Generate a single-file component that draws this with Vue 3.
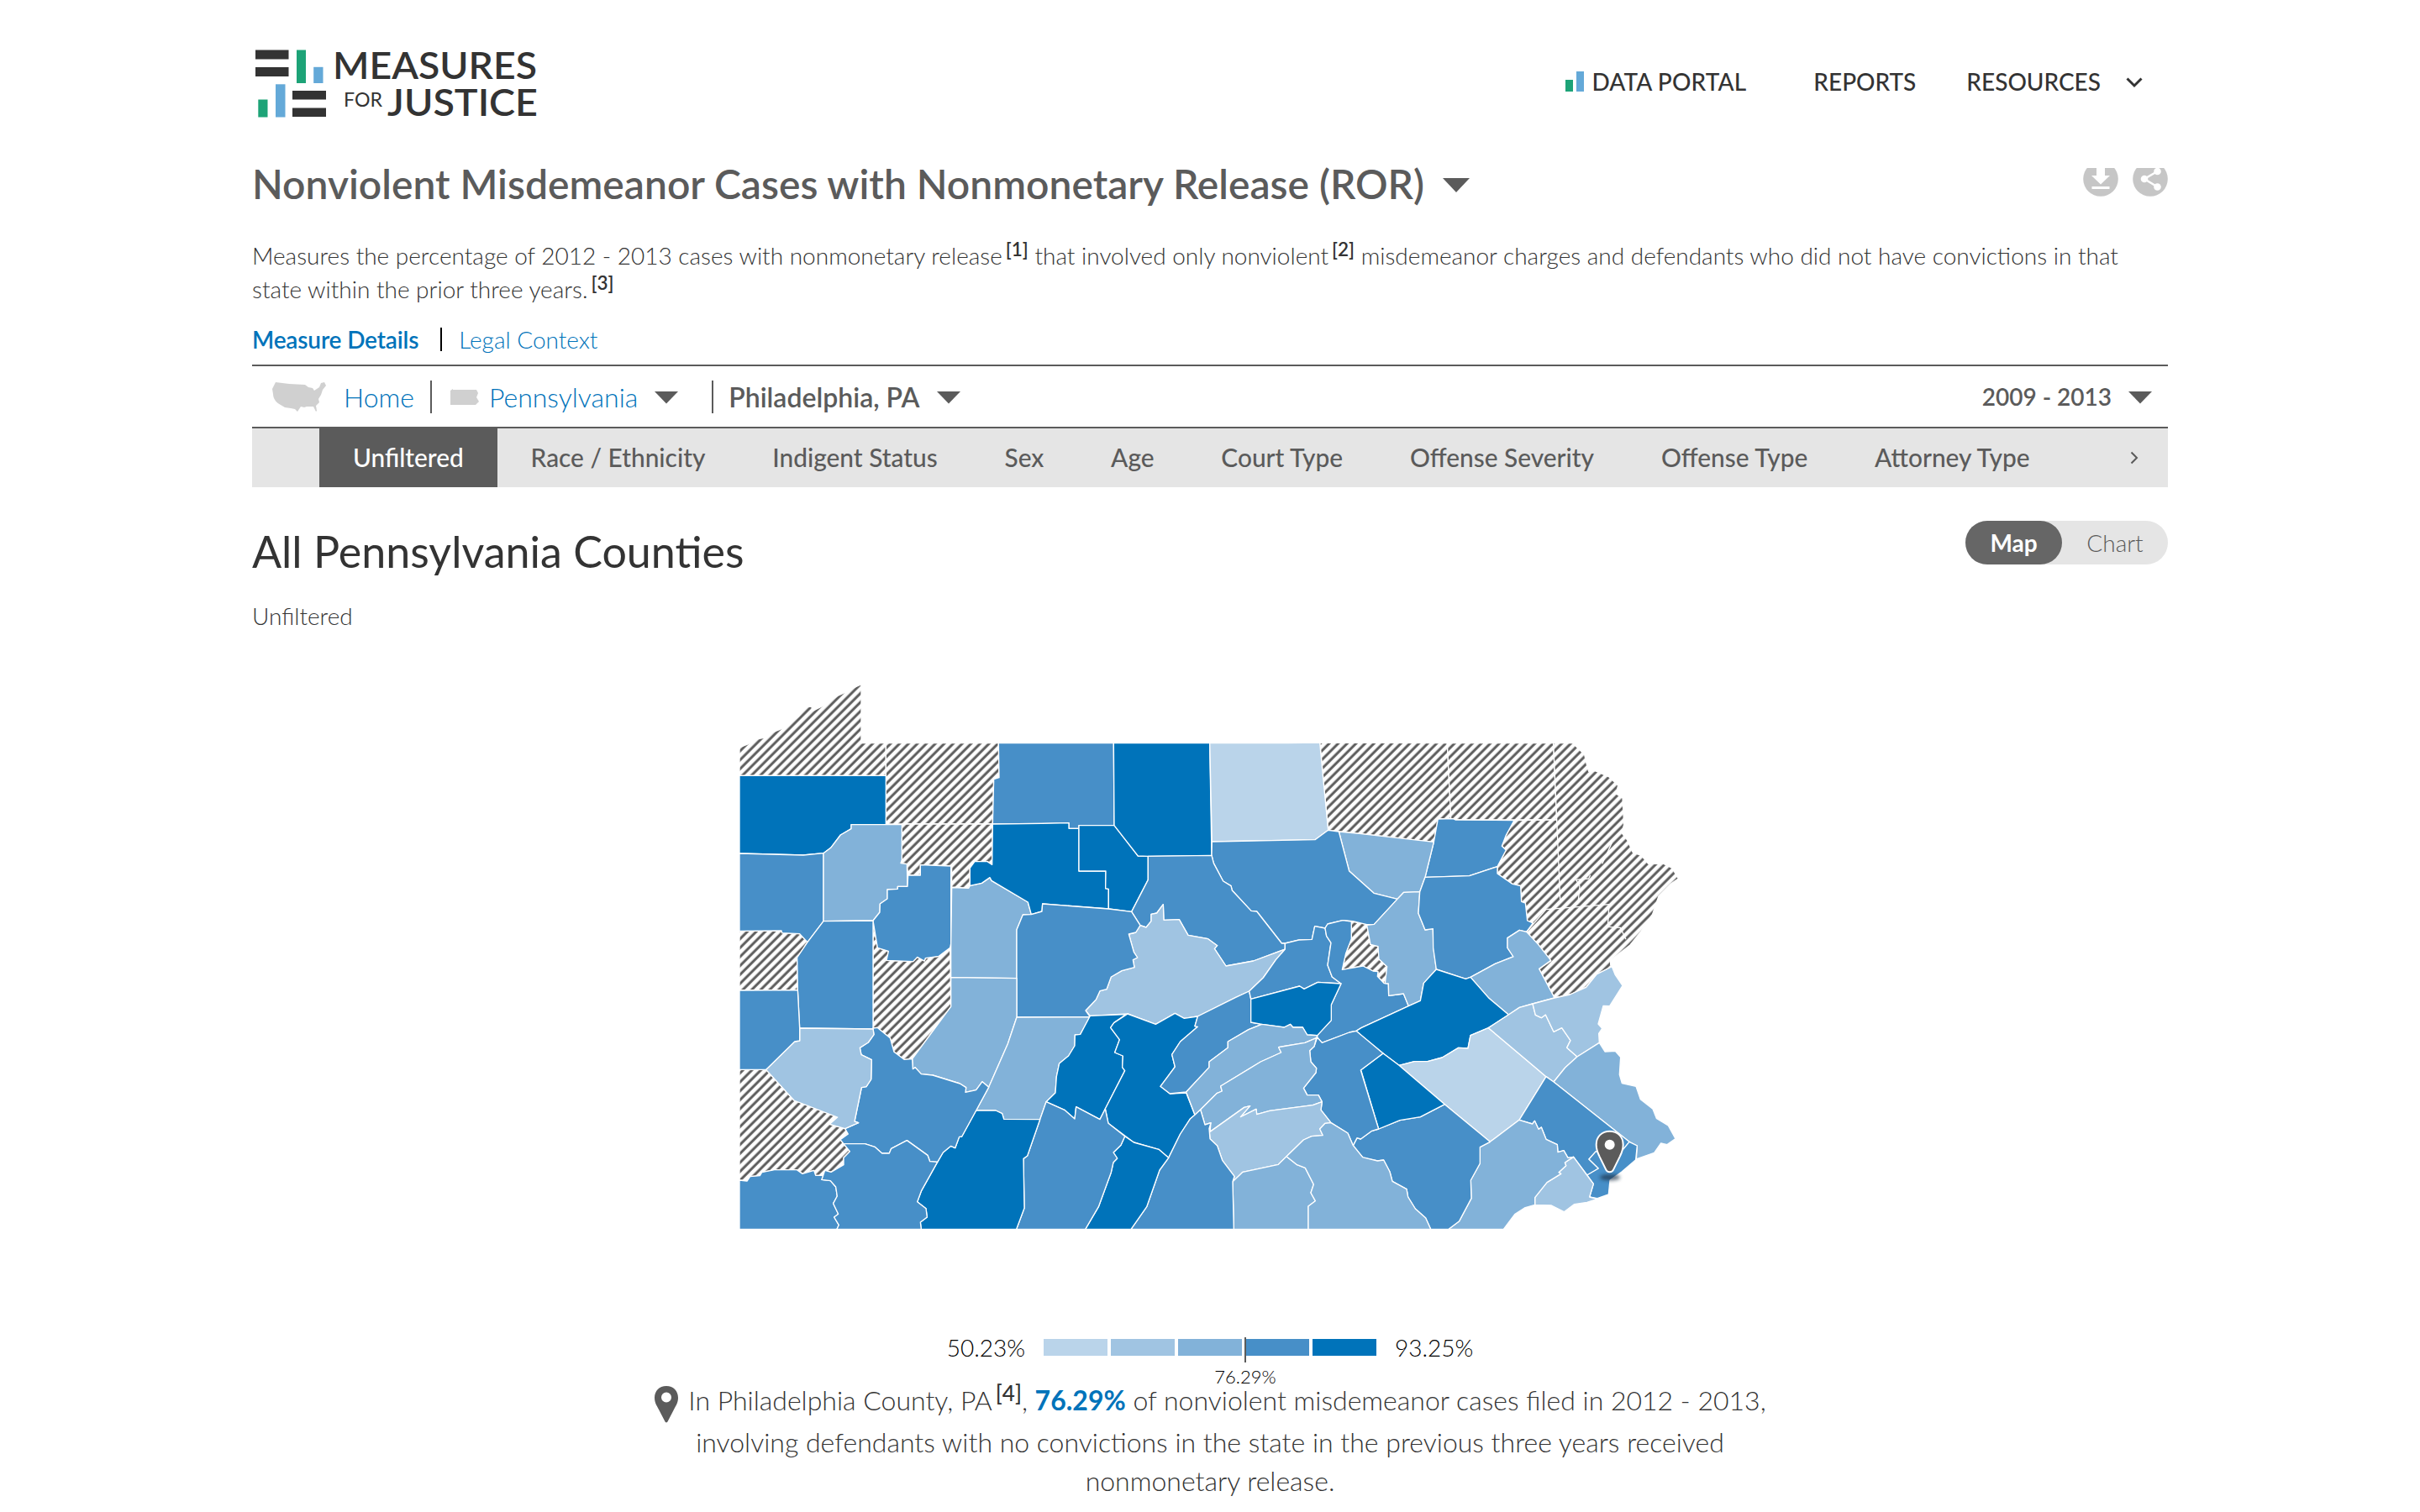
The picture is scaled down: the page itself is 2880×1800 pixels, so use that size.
<script setup>
const tabs = ['Unfiltered', 'Race / Ethnicity', 'Indigent Status', 'Sex', 'Age', 'Court Type', 'Offense Severity', 'Offense Type', 'Attorney Type']

const scale = ['#bad4ea', '#a0c4e2', '#82b2d9', '#478fc8', '#0073ba']

// County outlines are stored in six map sheets; a letter switches the sheet origin.
const sheets = { A: [0, 0], B: [1140, 0], C: [2280, 0], D: [0, 990], E: [1140, 990], F: [2280, 990] }

function pts(outline) {
  let o = sheets.A
  const out = []
  for (const t of outline.trim().split(/\s+/)) {
    if (sheets[t]) { o = sheets[t]; continue }
    const [x, y] = t.split(',').map(Number)
    out.push((x + o[0]) + ',' + (y + o[1]))
  }
  return out.join(' ')
}

// level 0 means no data, 1-5 index the colour scale
const counties = [
  [0, 'A 60,270 90,258 120,240 150,234 180,215 212,202 240,185 270,160 300,125 318,123 320,140 360,120 410,85 440,72 465,58 495,44 495,254 583,254 583,370 60,370'],
  [0, 'A 583,254 985,254 987,377 968,383 964,543 583,543'],
  [0, 'A 640,543 964,543 962,688 945,677 900,677 883,700 883,765 878,772 818,768 818,692 706,689 706,726 662,726 658,686 636,683 640,670'],
  [0, 'A 60,925 210,924 212,932 275,935 303,965 266,1020 268,1136 60,1137'],
  [0, 'A 537,888 553,985 592,997 585,1030 680,1034 695,1018 720,1032 724,1022 772,1015 812,985 815,1195 677,1382 648,1384 612,1357 598,1307 552,1270 537,1272'],
  [0, 'D 60,430 155,430 255,540 410,600 382,625 437,641 448,660 420,680 454,722 432,745 432,770 387,796 365,790 360,808 332,808 326,790 285,802 265,788 185,788 140,797 133,809 98,812 87,828 60,825'],
  [0, 'B 992,252 C 307,254 320,523 274,525 259,607 0,578 B 1060,570 1022,565'],
  [0, 'C 307,254 686,254 698,528 334,528 320,523'],
  [0, 'B 1105,891 1160,901 1172,973 C 33,973 60,980 63,1023 F 63,35 92,62 88,122 82,122 58,97 60,82 E 1182,78 1146,60 1072,73 B 1085,1005 1105,953'],
  [0, 'C 686,254 755,254 797,295 805,330 812,355 835,353 885,375 917,405 910,435 933,450 938,545 930,575 950,600 970,645 1000,655 1025,685 1080,685 1110,700 1132,738 1105,757 1062,800 1040,865 1000,925 960,975 890,1030 890,1045 F 895,62 840,90 803,136 745,162 690,174 635,70 677,42 C 632,973 590,928 613,897 593,888 586,825 572,820 569,764 540,757 486,720 486,695 517,636 502,622 517,583 546,530 698,528'],
  [5, 'A 60,370 583,370 583,548 459,545 459,560 421,582 386,628 360,647 288,654 60,648'],
  [4, 'A 985,254 1396,254 1398,548 1272,548 1272,559 1236,559 1236,539 1140,541 964,543 968,383 987,377'],
  [4, 'A 60,648 288,654 360,647 360,890 303,965 275,935 212,932 210,924 60,925'],
  [3, 'A 459,545 640,545 640,670 636,683 658,686 660,766 625,766 625,775 588,777 588,810 562,828 561,858 537,888 360,890 360,647 386,628 421,582 459,560'],
  [4, 'A 662,726 706,726 706,689 815,693 815,970 812,985 772,1015 724,1022 720,1032 695,1018 680,1034 585,1030 592,997 553,985 537,888 561,858 562,828 588,810 588,777 625,775 625,766 660,766'],
  [4, 'A 360,890 537,888 537,1275 275,1272 268,1136 266,1020 303,965'],
  [3, 'A 818,770 878,772 883,763 925,754 954,734 960,745 1090,822 1102,866 1072,867 1050,920 1050,1094 815,1091 815,970'],
  [5, 'A 964,543 1140,541 1236,539 1236,559 1272,559 1272,711 1368,711 1367,773 1378,775 1378,846 1142,828 1140,855 1102,866 1090,822 960,745 954,734 925,754 883,763 883,700 900,677 945,677 962,688'],
  [5, 'A 1272,548 1398,548 1483,657 1519,658 1519,742 1460,856 1378,846 1378,775 1367,773 1368,711 1272,711'],
  [5, 'A 1396,254 1739,254 1746,655 1519,658 1483,657 1398,548'],
  [1, 'A 1739,254 2020,254 2132,252 2162,565 2115,599 1747,606'],
  [4, 'A 2554,525 2608,524 2616,528 2826,530 2797,583 2782,622 2797,636 2766,695 2666,728 2508,733 2539,607'],
  [3, 'A 2200,570 2280,578 2539,607 2508,733 2489,785 2432,787 2409,811 2325,790 2237,711'],
  [4, 'A 1747,606 2115,599 2162,565 2200,570 2237,711 2325,790 2409,811 2326,901 2300,902 2250,890 2214,887 2160,900 2150,915 2114,908 2104,955 2060,957 2008,969 1996,969 1907,855 1887,853 1819,780 1815,764 1787,747 1753,683 1746,655'],
  [4, 'A 1519,658 1746,655 1753,683 1787,747 1815,764 1819,780 1887,853 1907,855 1996,969 2008,969 2008,990 1895,1032 1797,1050 1756,988 1766,977 1733,953 1662,940 1630,884 1575,886 1573,830 1550,861 1530,865 1530,890 1512,912 1491,905 1460,856 1519,742'],
  [2, 'A 1573,830 1575,886 1630,884 1662,940 1733,953 1766,977 1756,988 1797,1050 1895,1032 2008,990 1975,1028 1930,1092 1880,1140 1832,1162 1696,1230 1648,1237 1615,1219 1546,1258 1446,1221 1312,1228 1296,1209 1333,1170 1347,1139 1371,1133 1387,1089 1425,1067 1470,1055 1465,1028 1481,1020 1468,1000 1450,936 1475,930 1491,905 1512,912 1530,890 1530,865 1550,861'],
  [4, 'A 1102,866 1140,855 1142,828 1378,846 1460,856 1491,905 1475,930 1450,936 1468,1000 1481,1020 1465,1028 1470,1055 1425,1067 1387,1089 1371,1133 1347,1139 1333,1170 1296,1209 1312,1232 1050,1233 1050,920 1072,867'],
  [3, 'A 815,1091 1050,1094 1050,1233 1018,1328 950,1483 927,1463 905,1493 867,1501 869,1484 847,1470 750,1440 709,1436 687,1412 679,1418 677,1382 815,1195'],
  [3, 'A 1050,1233 1312,1232 1277,1294 1258,1296 1257,1335 1235,1371 1202,1398 1192,1445 1188,1503 1155,1535 1133,1598 1004,1597 998,1577 975,1566 905,1566 950,1483 1018,1328'],
  [5, 'E 172,238 300,233 257,263 245,280 277,323 260,369 289,381 287,422 296,434 226,570 207,608 122,563 117,606 82,575 15,545 48,513 52,455 62,408 95,381 117,345 118,306 137,304'],
  [5, 'E 306,231 406,268 475,229 508,247 556,240 546,275 556,277 494,330 464,376 475,420 423,490 457,516 515,513 546,592 530,605 494,660 452,745 417,715 328,690 237,622 226,570 296,434 287,422 289,381 260,369 277,323 245,280 257,263'],
  [4, 'E 556,240 692,172 740,150 746,178 746,261 785,268 738,287 664,330 664,352 597,402 597,422 515,510 457,516 423,490 475,420 464,376 494,330 556,277 546,275'],
  [4, 'E 740,150 790,102 835,38 868,0 B 868,969 917,957 964,955 974,908 1011,915 1016,943 1032,967 E 1028,0 1020,57 1036,99 1068,123 985,118 936,142 920,132 746,178'],
  [4, 'B 1011,915 1020,900 1074,887 1105,891 1105,953 1085,1005 E 1072,73 1146,60 1182,78 1200,80 F 58,97 82,122 97,123 98,166 151,159 169,203 0,281 E 1122,292 1098,297 1000,334 983,315 983,308 1033,254 1033,198 1068,123 1036,99 1020,57 B 1032,967 1016,943'],
  [5, 'E 746,178 920,132 936,142 985,118 1068,123 1033,198 1033,254 983,308 947,306 931,279 896,279 887,268 865,279 785,268 746,261'],
  [3, 'C 20,904 46,901 129,811 152,787 209,785 204,862 228,921 256,917 258,985 F 268,72 223,121 211,184 169,203 151,159 98,166 97,123 85,122 92,62 63,35 C 60,980 33,973'],
  [4, 'C 228,733 386,728 486,695 486,720 540,757 569,764 572,820 586,825 593,888 613,897 590,928 565,922 522,950 522,985 543,1016 F 478,52 390,100 373,106 268,72 C 257,985 256,917 228,921 204,862 209,785'],
  [3, 'C 565,922 590,928 632,973 677,1030 F 635,70 690,174 612,195 565,208 526,234 454,173 390,100 478,52 543,27 C 522,985 522,950'],
  [5, 'F 268,72 373,106 390,100 454,173 526,234 454,281 390,308 381,354 347,352 289,387 237,401 190,401 135,415 78,372 0,308 E 1122,292 F 0,281 169,203 211,184 223,121'],
  [1, 'F 454,281 660,455 564,610 460,688 298,554 135,415 190,401 237,401 289,387 347,352 381,354 390,308'],
  [2, 'F 526,234 565,208 612,195 622,235 643,245 658,234 687,295 716,281 747,326 734,352 771,384 728,423 687,474 660,455 454,281'],
  [2, 'F 612,195 690,174 745,162 803,136 840,90 895,62 907,92 933,130 887,203 864,202 846,267 860,283 848,301 850,334 771,384 734,352 747,326 716,281 687,295 658,234 643,245 622,235'],
  [3, 'F 850,334 870,366 907,364 926,386 922,448 931,479 981,490 997,536 1041,571 1054,604 1096,630 1122,677 1092,698 1070,693 1046,727 982,750 985,702 957,688 687,474 728,423 771,384'],
  [4, 'F 660,455 687,474 957,688 935,715 900,745 838,722 813,750 847,783 806,807 758,742 738,745 723,719 702,725 700,698 660,679 643,636 633,643 619,613 611,624 564,610'],
  [4, 'F 957,688 985,702 980,752 930,795 888,825 883,876 843,890 815,885 829,838 806,807 847,783 813,750 838,722 900,745 935,715'],
  [2, 'F 758,742 806,807 829,838 815,885 843,892 806,904 760,911 724,938 679,915 620,913 620,887 663,833 713,802 705,797 731,773 727,762 742,752'],
  [3, 'F 460,688 564,610 611,624 619,613 633,643 643,636 660,679 700,698 702,725 723,719 738,745 758,742 742,752 727,762 731,773 705,797 713,802 663,833 620,887 620,913 583,924 548,947 508,1000 312,1000 350,971 393,890 391,825 424,765 424,707'],
  [4, 'F 62,642 138,611 211,599 298,554 460,688 424,707 424,765 391,825 393,890 350,971 312,1000 248,1000 230,960 193,927 167,885 162,857 111,829 102,795 80,753 58,756 7,745 E 1145,743 1111,701 1125,674 1138,678 F 38,649'],
  [5, 'F 78,372 135,415 298,554 211,599 138,611 62,642 0,435 E 1138,432'],
  [4, 'E 983,315 1000,334 1098,297 1122,292 F 78,372 E 1138,432 F 62,642 38,649 E 1138,678 1125,674 1111,701 1092,657 1032,620 996,574 1000,545 987,521 947,521 934,496 978,441 980,425 960,402 956,362 972,347'],
  [3, 'E 785,268 865,279 887,268 896,279 931,279 947,306 983,308 980,317 939,334 845,350 854,369 781,402 638,489 643,507 624,515 566,573 546,592 515,510 597,422 597,402 664,352 664,330 738,287'],
  [3, 'E 980,317 972,347 956,362 960,402 980,425 978,441 934,496 947,521 987,521 1000,545 967,557 813,577 767,590 765,571 709,599 743,560 722,565 600,652 603,620 582,627 566,573 624,515 643,507 638,489 781,402 854,369 845,350 939,334'],
  [2, 'E 1000,545 996,574 1032,620 1011,622 992,642 1003,665 963,668 934,681 873,740 844,769 717,796 683,830 687,811 644,754 626,702 600,677 597,640 600,652 722,565 743,560 709,599 765,571 767,590 813,577 967,557'],
  [3, 'E 873,740 911,770 940,781 970,840 960,870 976,899 951,918 951,1000 685,1000 681,830 717,796 844,769'],
  [3, 'E 1032,620 1092,657 1111,701 1145,743 1198,756 F 80,753 102,795 111,829 162,857 167,885 193,927 230,960 248,1000 E 951,1000 951,918 976,899 960,870 970,840 940,781 911,770 873,740 934,681 963,668 1003,665 992,642 1011,622'],
  [4, 'E 546,592 566,573 582,627 603,620 597,640 600,677 626,702 644,754 687,811 681,830 685,1000 318,1000 374,920 420,789 452,745 494,660 530,605'],
  [5, 'E 296,668 328,690 417,715 452,745 420,789 374,920 318,1000 155,1000 202,920 247,797 255,761 269,747 255,726 282,700'],
  [4, 'E 15,545 82,575 117,606 122,563 207,608 226,570 237,622 296,668 282,700 255,726 269,747 255,761 247,797 202,920 155,1000 D 1049,1000 1077,925 1074,748 1088,738 1133,608'],
  [5, 'D 905,576 975,576 998,587 1004,607 1133,608 1088,738 1074,748 1077,925 1049,1000 709,1000 706,975 730,957 726,926 695,902 710,862 767,760 787,726 815,703 830,710 845,670 854,669'],
  [4, 'D 537,282 552,280 598,317 612,367 648,394 677,392 679,428 687,422 709,446 750,450 847,480 869,494 867,511 905,503 927,473 950,493 905,576 854,669 845,670 830,710 815,703 787,726 767,760 740,758 732,736 658,683 602,712 595,729 569,729 543,706 508,695 432,695 420,680 448,660 437,641 485,620 471,615 496,494 513,491 530,465 532,395 495,377 490,352 520,333 540,305'],
  [2, 'D 275,282 537,285 540,305 520,333 490,352 495,377 532,395 530,465 513,491 496,494 471,615 485,620 437,641 382,625 410,600 255,540 155,430 257,330 275,327'],
  [4, 'D 60,147 268,146 275,282 275,327 257,330 155,430 60,430'],
  [4, 'D 60,825 87,828 98,812 133,809 140,797 185,788 265,788 285,802 326,790 332,808 360,808 354,823 385,827 404,849 409,882 395,908 413,946 398,957 415,985 408,1000 60,1000'],
  [4, 'D 432,695 508,695 543,706 569,729 595,729 602,712 658,683 732,736 740,758 767,760 710,862 695,902 726,926 730,957 706,975 709,1000 408,1000 415,985 398,957 413,946 395,908 409,882 404,849 385,827 354,823 365,790 387,796 432,770 432,745 454,722'],
].map(([level, outline]) => ({ fill: level ? scale[level - 1] : 'url(#hatch)', points: pts(outline) }))

const borders = [
  'C 698,528 710,812',
  'C 590,928 660,848 885,830 880,910 925,913 945,955',
  'C 775,815 780,765 767,742 812,738 818,725',
  'C 860,685 895,610',
].map(pts)
</script>

<template>
  <div class="page">
    <header class="top">
      <svg class="logo" width="350" height="120" viewBox="302 40 350 120">
        <g fill="#333">
          <rect x="304" y="59.5" width="39.5" height="11" /><rect x="304" y="80" width="39.5" height="11" />
          <rect x="348" y="108" width="40" height="10.5" /><rect x="348" y="128.5" width="40" height="10.5" />
        </g>
        <g fill="#1da377"><rect x="353" y="59.5" width="11" height="39.5" /><rect x="307.300" y="118.500" width="11.200" height="21" /></g>
        <g fill="#64a9d8"><rect x="373.200" y="79.800" width="11.300" height="19.200" /><rect x="328" y="100.300" width="11.500" height="39.200" /></g>
        <g fill="#333">
          <text class="wm" x="396" y="93.500" textLength="243" lengthAdjust="spacingAndGlyphs">MEASURES</text>
          <text class="wm" x="461" y="138" textLength="179" lengthAdjust="spacingAndGlyphs">JUSTICE</text>
          <text class="wf" x="409" y="127" textLength="46" lengthAdjust="spacingAndGlyphs">FOR</text>
        </g>
      </svg>
      <nav class="nav">
        <a class="portal"><svg width="24" height="26" viewBox="0 0 24 26"><path fill="#1da377" d="M0 11h9v14H0z" /><path fill="#64a9d8" d="M13 1h9v24h-9z" /></svg>DATA PORTAL</a>
        <a class="reports">REPORTS</a>
        <a class="resources">RESOURCES</a>
        <svg class="chev" width="20" height="13" viewBox="0 0 20 13"><path d="M1.500 1.500l8.500 8.500 8.500-8.500" fill="none" stroke="#333" stroke-width="3" /></svg>
      </nav>
    </header>

    <div class="title-row">
      <h1>Nonviolent Misdemeanor Cases with Nonmonetary Release (ROR)</h1>
      <svg class="title-caret" width="32" height="18" viewBox="0 0 32 18"><path d="M0 0h32L16 17z" fill="#5b5b5b" /></svg>
      <div class="actions">
        <svg width="42" height="34" viewBox="0 8 42 34">
          <circle cx="21" cy="21" r="20.800" fill="#c6c6c6" />
          <path fill="#fff" d="M16 4h10v13h6L21 27.500 10 17h6zM10.500 30h21v3h-21z" />
        </svg>
        <svg width="42" height="34" viewBox="0 8 42 34">
          <circle cx="21" cy="21" r="20.800" fill="#c6c6c6" />
          <path d="M29.500 12L14 21l15.500 9.500" fill="none" stroke="#fff" stroke-width="2.600" />
          <g fill="#fff"><circle cx="29.500" cy="12" r="4.300" /><circle cx="14" cy="21" r="4.300" /><circle cx="29.500" cy="30.500" r="4.300" /></g>
        </svg>
      </div>
    </div>

    <p class="desc">Measures the percentage of 2012 - 2013 cases with nonmonetary release<sup>[1]</sup> that involved only nonviolent<sup>[2]</sup> misdemeanor charges and defendants who did not have convictions in that<br />state within the prior three years.<sup>[3]</sup></p>

    <div class="links"><b>Measure Details</b><i></i><a>Legal Context</a></div>

    <div class="crumbs">
      <svg class="us" width="64" height="36" viewBox="0 0 64 36"><path fill="#d0d0d0" d="M4 1l16 2 19 1 4 3 5 1 2 3 6-4 2-5 4-1 2 4-4 5-2 6-3 5 1 4-4 4 1 6-1 1-3-6-8 0-3 1-4-1-4 6-3-3-5-1-7-1-5-3C4 25 1 20 1 15L0 9z" /></svg>
      <a class="home">Home</a>
      <i class="bar"></i>
      <svg class="pa" width="36" height="20" viewBox="0 0 36 20"><path fill="#d0d0d0" d="M1 2l3-2v1h28l2 4-2 5 3 5-4 4H1z" /></svg>
      <a class="state">Pennsylvania</a>
      <svg class="caret" width="28" height="15" viewBox="0 0 28 15"><path d="M0 0h28L14 14.500z" fill="#5b5b5b" /></svg>
      <i class="bar second"></i>
      <b class="county">Philadelphia, PA</b>
      <svg class="caret" width="28" height="15" viewBox="0 0 28 15"><path d="M0 0h28L14 14.500z" fill="#5b5b5b" /></svg>
      <b class="years">2009 - 2013</b>
      <svg class="caret last" width="28" height="15" viewBox="0 0 28 15"><path d="M0 0h28L14 14.500z" fill="#5b5b5b" /></svg>
    </div>

    <div class="tabs">
      <a v-for="(t, i) in tabs" :key="t" :class="{ active: i === 0 }">{{ t }}</a>
      <svg class="next" width="10" height="16" viewBox="0 0 10 16"><path d="M1.500 1.500L8 8l-6.500 6.500" fill="none" stroke="#5b5b5b" stroke-width="2" /></svg>
    </div>

    <div class="view-head">
      <h2>All Pennsylvania Counties</h2>
      <div class="toggle"><b>Map</b><span>Chart</span></div>
    </div>
    <div class="filter">Unfiltered</div>

    <div class="map">
      <svg width="1160" height="680" viewBox="0 0 3480 2040">
        <defs>
          <pattern id="hatch" width="22.590" height="22.590" patternUnits="userSpaceOnUse" patternTransform="rotate(45)">
            <rect width="22.590" height="22.590" fill="#fff" />
            <rect x="13" width="9" height="22.590" fill="#5b5b5b" />
          </pattern>
          <filter id="soft" x="-50%" y="-100%" width="200%" height="300%"><feGaussianBlur stdDeviation="7" /></filter>
        </defs>
        <g stroke="#fff" stroke-width="4" stroke-linejoin="round">
          <polygon v-for="(c, i) in counties" :key="i" :points="c.points" :fill="c.fill" />
          <polyline v-for="b in borders" :key="b" :points="b" fill="none" />
        </g>
        <ellipse cx="3168" cy="1805" rx="36" ry="11" fill="#1d3346" opacity=".7" filter="url(#soft)" />
        <path d="M3167 1640c-28 0-48 20-48 48 0 18 5 28 11 41l24 49c4 10 22 10 26 0l24-49c6-13 11-23 11-41 0-28-20-48-48-48z" fill="#5b5b5b" stroke="#fff" stroke-width="6" />
        <circle cx="3167" cy="1688" r="18" fill="#fff" />
      </svg>
    </div>

    <div class="legend">
      <span>50.23%</span>
      <div class="ramp">
        <i v-for="c in scale" :key="c" :style="{ background: c }"></i>
        <div class="marker"><u></u><small>76.29%</small></div>
      </div>
      <span>93.25%</span>
    </div>

    <p class="caption">
      <span class="line"><svg width="30" height="44" viewBox="0 0 30 44"><path fill="#5b5b5b" fill-rule="evenodd" d="M15 0C6.500 0 1 6 1 14c0 6 2.500 9 5 14l7 13.500c1 2.500 3 2.500 4 0L24 28c2.500-5 5-8 5-14C29 6 23.500 0 15 0zm0 7.500a6 6 0 1 1 0 12 6 6 0 0 1 0-12z" /></svg><span>In Philadelphia County, PA<sup>[4]</sup>, <b>76.29%</b> of nonviolent misdemeanor cases filed in 2012 - 2013,</span></span>
      <span class="line">involving defendants with no convictions in the state in the previous three years received</span>
      <span class="line third">nonmonetary release.</span>
    </p>
  </div>
</template>

<style>
body { margin: 0; background: #fff; }
</style>

<style scoped>
.page { box-sizing: border-box; width: 2880px; height: 1800px; overflow: hidden; padding: 0 300px; background: #fff; color: #333; font-family: Lato, sans-serif; font-weight: 300; font-size: 28px; }
.page * { box-sizing: border-box; }
.page svg { display: block; flex: none; }
.page h1, .page h2, .page p { margin: 0; }
.page a { color: #0073ba; }
.page i, .page u { font-style: normal; text-decoration: none; display: block; }
.top { display: flex; height: 200px; }
.logo { margin: 40px 0 0 2px; }
.wm { font-size: 44px; font-weight: 600; }
.wf { font-size: 24px; font-weight: 400; }
.nav { display: flex; align-items: center; height: 194px; margin-left: auto; padding-right: 30px; font-weight: 500; }
.nav a { color: #333; white-space: nowrap; }
.portal { display: flex; align-items: center; gap: 7px; letter-spacing: .15px; }
.reports { margin-left: 80px; }
.resources { margin-left: 60px; }
.chev { margin: 2px 0 0 30px; }
.title-row { display: flex; height: 84px; }
h1 { font-size: 48px; font-weight: 600; line-height: 37px; color: #5b5b5b; white-space: nowrap; }
.title-caret { margin: 12px 0 0 22px; }
.actions { display: flex; gap: 17px; margin-left: auto; }
.desc { height: 80px; line-height: 40px; white-space: nowrap; }
sup { font-size: 22.500px; font-weight: 600; line-height: 0; vertical-align: baseline; position: relative; top: -10.500px; margin-left: 4px; }
.links { display: flex; align-items: center; height: 70px; padding-top: 10px; }
.links b { color: #0073ba; font-weight: 600; letter-spacing: -.15px; }
.links i { width: 2px; height: 28px; background: #000; margin: 0 20px 0 26px; }
.crumbs { display: flex; align-items: center; height: 76px; border-top: 2px solid #5b5b5b; border-bottom: 2px solid #5b5b5b; font-size: 32px; color: #5b5b5b; }
.us { margin-left: 24px; }
.home { margin-left: 21px; }
.bar { width: 2px; height: 39px; background: #5b5b5b; margin-left: 19px; }
.pa { margin: 2px 0 0 21px; }
.state { margin-left: 11px; }
.caret { margin: 2px 0 0 20px; }
.bar.second { margin-left: 40px; }
.county { margin-left: 18px; font-weight: 600; }
.county + .caret { margin-left: 21px; }
.years { margin-left: auto; font-size: 28px; font-weight: 600; }
.caret.last { margin-right: 19px; }
.tabs { display: flex; align-items: center; height: 70px; padding: 0 35px 0 80px; background: #e5e5e5; font-size: 29.850px; font-weight: 500; }
.tabs a { height: 70px; line-height: 70px; padding: 0 39.900px; color: #5b5b5b; white-space: nowrap; }
.tabs a.active { background: #5b5b5b; color: #fff; }
.next { margin-left: auto; }
.view-head { display: flex; justify-content: space-between; height: 116px; padding-top: 40px; }
h2 { font-size: 52px; font-weight: 400; line-height: 72px; }
.toggle { display: flex; height: 52px; line-height: 52px; border-radius: 26px; background: #e5e5e5; color: #5b5b5b; }
.toggle b { width: 115px; text-align: center; border-radius: 26px; background: #666; color: #fff; font-weight: 700; }
.toggle span { width: 126px; text-align: center; }
.filter { height: 104px; line-height: 74px; }
.map { height: 780px; padding-left: 560px; }
.legend { display: flex; justify-content: center; align-items: center; height: 48px; color: #000; }
.ramp { position: relative; display: flex; gap: 4px; margin: 0 22px; }
.ramp i { width: 76px; height: 20px; }
.marker { position: absolute; left: 200px; top: -2px; width: 80px; }
.marker u { width: 2px; height: 30px; margin: 0 auto; background: #5b5b5b; }
.marker small { display: block; text-align: center; font-size: 22px; line-height: 24px; margin-top: 5px; }
.caption { display: flex; flex-direction: column; padding-top: 14px; font-size: 32px; }
.line { display: flex; justify-content: center; height: 50px; line-height: 50px; white-space: nowrap; }
.line svg { margin: 8px 11px 0 0; }
.line b { color: #0073ba; font-weight: 700; }
.line sup { font-size: 26px; top: -11px; font-weight: 500; margin-left: 4px; }
.third { margin-top: -4px; }
</style>
